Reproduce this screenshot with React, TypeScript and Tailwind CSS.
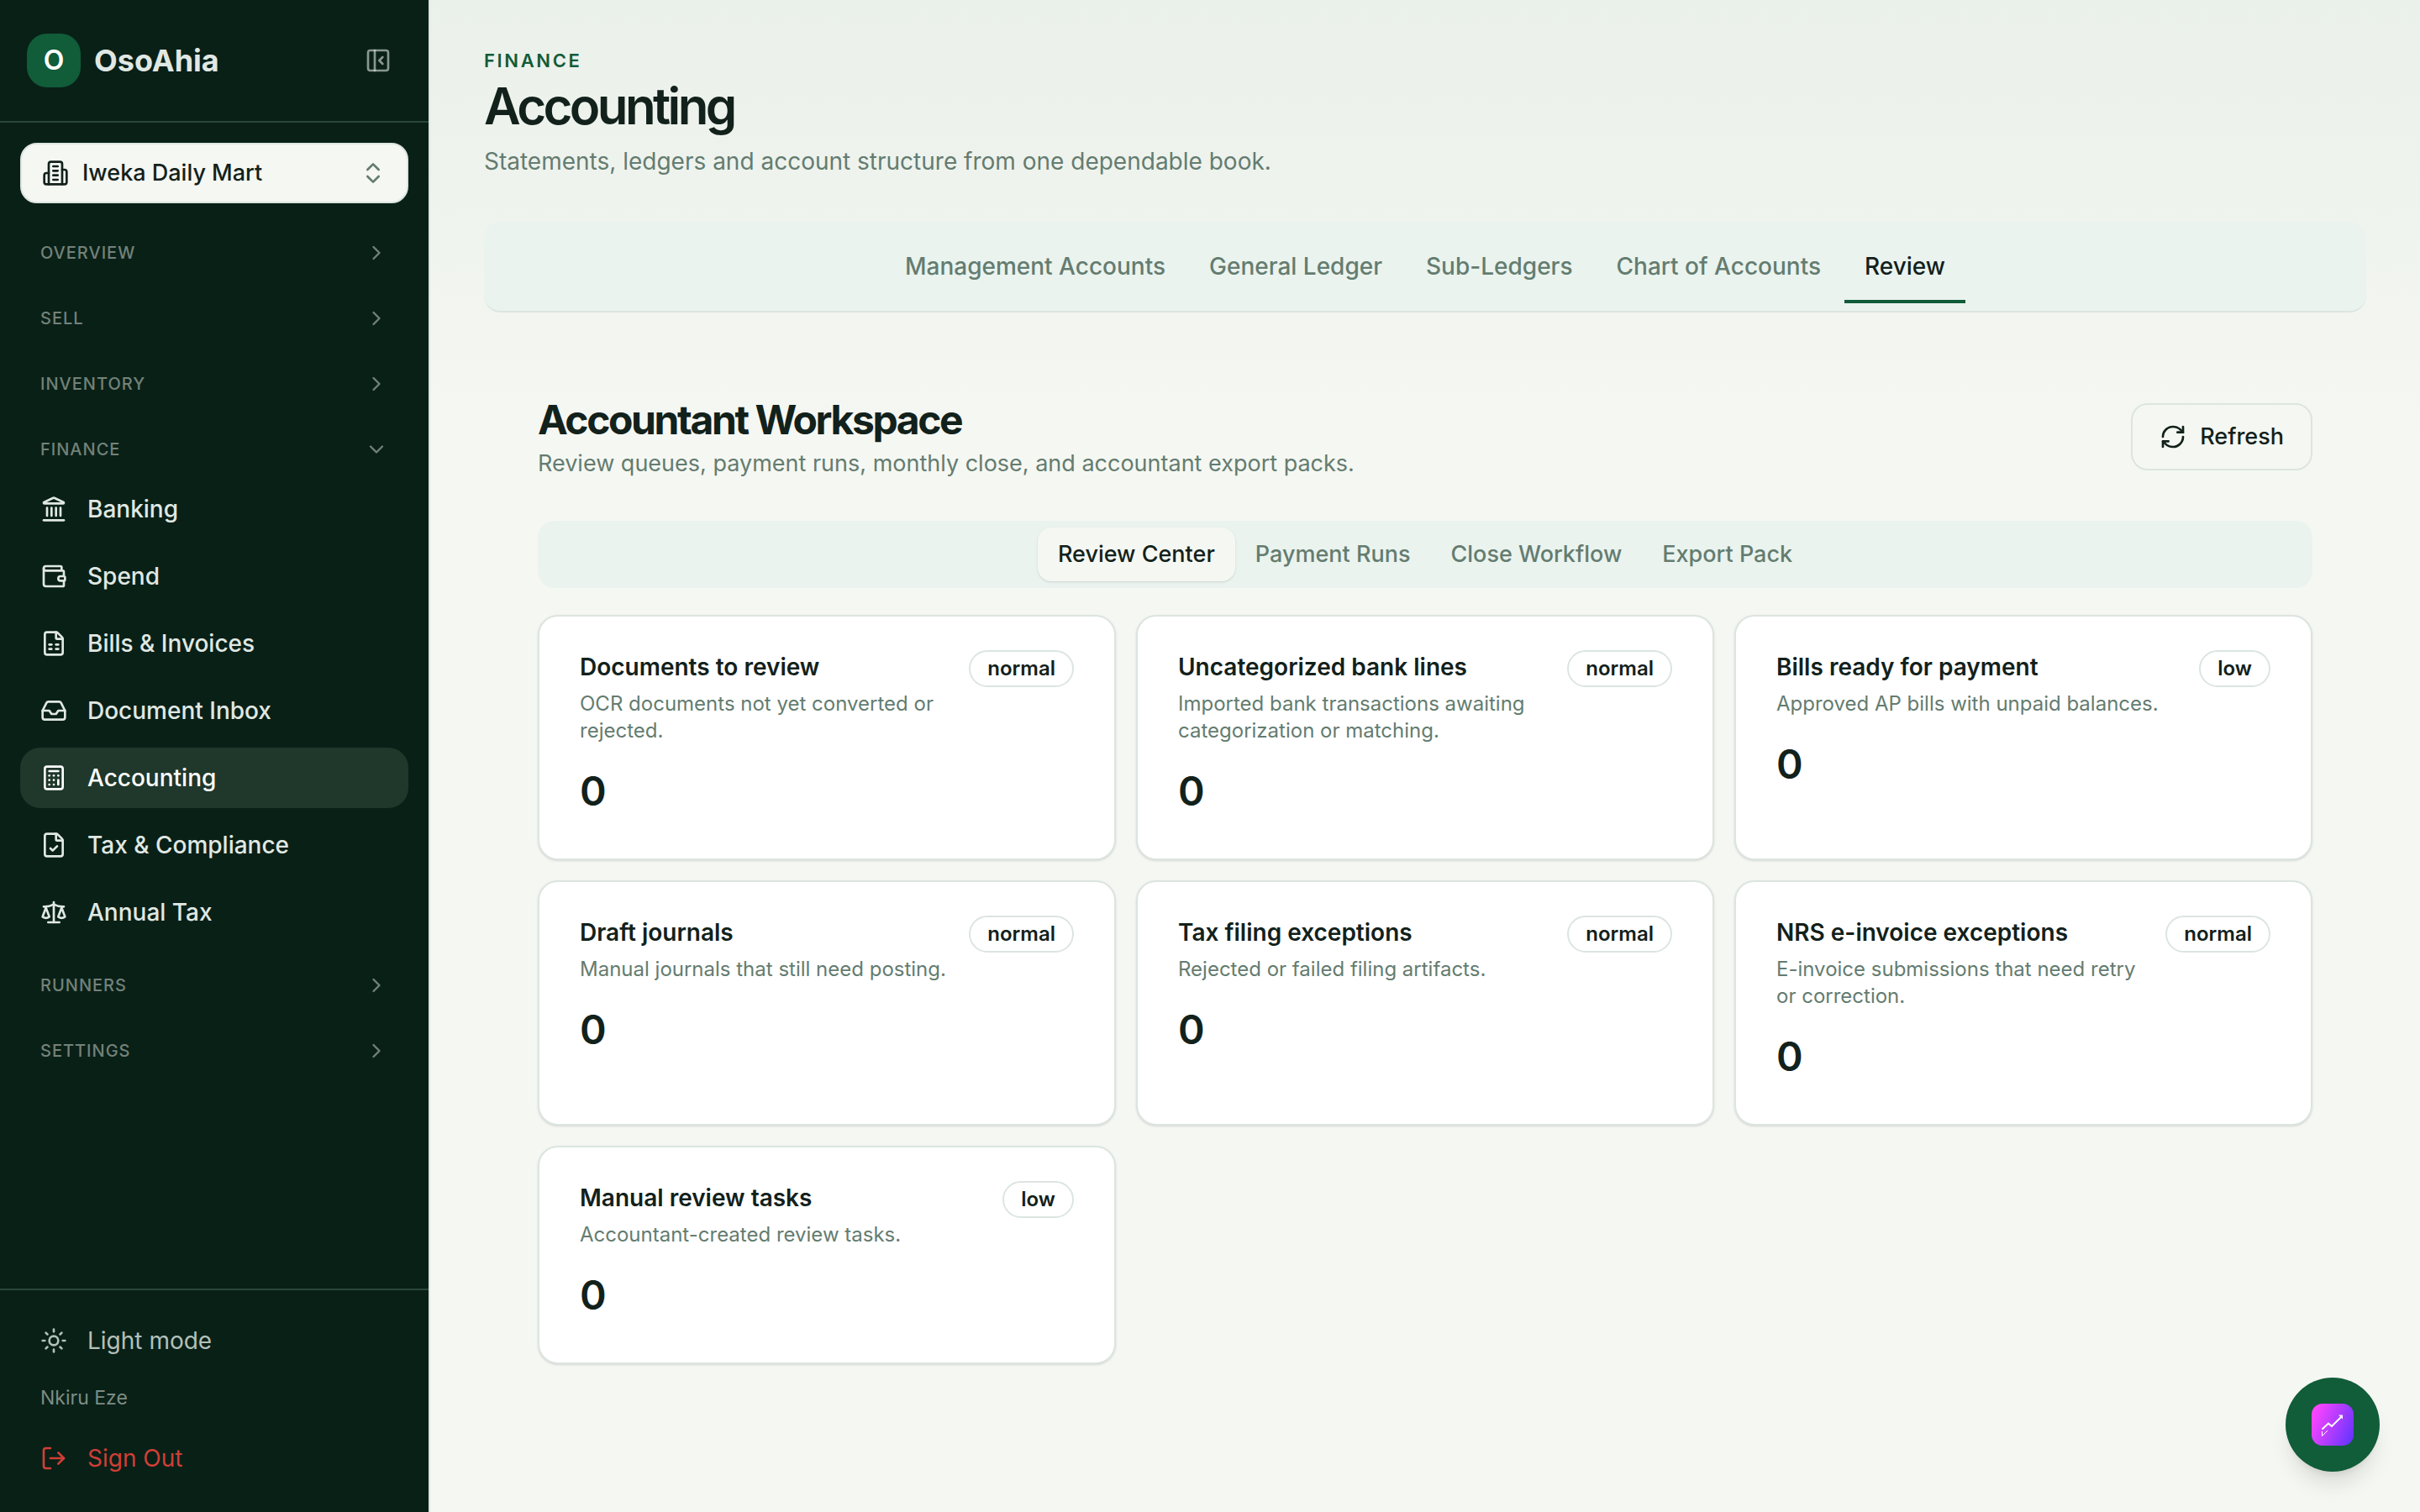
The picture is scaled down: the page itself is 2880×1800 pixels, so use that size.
import type { ReactNode } from "react";
import {
    Calculator,
    ChevronDown,
    ChevronRight,
    ChevronsUpDown,
    FileCheck,
    FileSpreadsheet,
    Inbox,
    Landmark,
    LogOut,
    PanelLeftClose,
    RefreshCw,
    Scale,
    Sun,
    Wallet,
} from "lucide-react";

const financeLinks = [
    { label: "Banking", icon: Landmark },
    { label: "Spend", icon: Wallet },
    { label: "Bills & Invoices", icon: FileSpreadsheet },
    { label: "Document Inbox", icon: Inbox },
    { label: "Accounting", icon: Calculator },
    { label: "Tax & Compliance", icon: FileCheck },
    { label: "Annual Tax", icon: Scale },
];

const accountingTabs = [
    "Management Accounts",
    "General Ledger",
    "Sub-Ledgers",
    "Chart of Accounts",
    "Review",
];

const workspaceTabs = ["Review Center", "Payment Runs", "Close Workflow", "Export Pack"];

const queues = [
    {
        title: "Documents to review",
        description: "OCR documents not yet converted or rejected.",
        priority: "normal",
        count: 0,
    },
    {
        title: "Uncategorized bank lines",
        description: "Imported bank transactions awaiting categorization or matching.",
        priority: "normal",
        count: 0,
    },
    {
        title: "Bills ready for payment",
        description: "Approved AP bills with unpaid balances.",
        priority: "low",
        count: 0,
    },
    {
        title: "Draft journals",
        description: "Manual journals that still need posting.",
        priority: "normal",
        count: 0,
    },
    {
        title: "Tax filing exceptions",
        description: "Rejected or failed filing artifacts.",
        priority: "normal",
        count: 0,
    },
    {
        title: "NRS e-invoice exceptions",
        description: "E-invoice submissions that need retry or correction.",
        priority: "normal",
        count: 0,
    },
    {
        title: "Manual review tasks",
        description: "Accountant-created review tasks.",
        priority: "low",
        count: 0,
    },
];

export default function App() {
    return (
        <div className="flex min-h-screen bg-[#f5f7f2] font-['Inter',sans-serif] text-[#12211b]">
            <Sidebar />
            <main className="min-w-0 flex-1 bg-[linear-gradient(to_bottom,#eaf0ea_0px,#f5f7f2_520px)] px-16 pb-16">
                <PageHeader />
                <AccountingTabs />
                <Workspace />
            </main>
            <AssistantButton />
        </div>
    );
}

const Sidebar = () => (
    <aside className="flex w-[512px] flex-shrink-0 flex-col border-r-2 border-[#dce5e0] bg-[#092017] text-[#e0e8e3]">
        <div className="flex h-[146px] items-center border-b-2 border-[#2a4739] pr-11 pl-8">
            <div className="flex size-16 items-center justify-center rounded-3xl bg-[#115c39] text-[32px] font-semibold text-white">
                O
            </div>
            <span className="ml-4 text-[36px] font-bold">OsoAhia</span>
            <button type="button" aria-label="Collapse sidebar" className="ml-auto text-[#e0e8e3]/60">
                <PanelLeftClose size={32} />
            </button>
        </div>

        <div className="px-6 pt-6">
            <button
                type="button"
                className="flex h-[72px] w-full items-center rounded-[20px] border-2 border-[#dce5e0] bg-[#f5f7f2] px-6 text-[#12211b]"
            >
                <BuildingIcon />
                <span className="ml-4 text-[27px] font-medium">Iweka Daily Mart</span>
                <ChevronsUpDown size={32} className="ml-auto text-[#647c70]" />
            </button>
        </div>

        <nav className="flex flex-col gap-6 px-6 pt-8">
            <NavSection label="Overview" />
            <NavSection label="Sell" />
            <NavSection label="Inventory" />
            <NavSection label="Finance" open>
                {financeLinks.map(({ label, icon: Icon }) => (
                    <a
                        key={label}
                        href="#"
                        className={`flex h-[72px] items-center gap-6 rounded-3xl px-6 text-[28px] font-medium ${
                            label === "Accounting" ? "bg-[#1f382b] text-white" : "text-[#e0e8e3]"
                        }`}
                    >
                        <Icon size={32} />
                        {label}
                    </a>
                ))}
            </NavSection>
            <NavSection label="Runners" />
            <NavSection label="Settings" />
        </nav>

        <div className="mt-auto border-t-2 border-[#2a4739] px-6 pt-6 pb-7">
            <button type="button" className="flex h-[72px] w-full items-center gap-6 px-6 text-[28px] text-[#b3c0b9]">
                <Sun size={32} />
                Light mode
            </button>
            <p className="flex h-[68px] items-center px-6 pb-1 text-[23px] text-[#7d8c84]">Nkiru Eze</p>
            <button type="button" className="flex h-[72px] w-full items-center gap-6 px-6 text-[28px] text-[#cf3f36]">
                <LogOut size={32} />
                Sign Out
            </button>
        </div>
    </aside>
);

interface NavSectionProps {
    label: string;
    open?: boolean;
    children?: ReactNode;
}

const NavSection = ({ label, open = false, children }: NavSectionProps) => {
    const Chevron = open ? ChevronDown : ChevronRight;
    return (
        <div>
            <button
                type="button"
                aria-expanded={open}
                className="flex h-[54px] w-full items-center justify-between px-6 text-[#738279]"
            >
                <span className="text-[20px] font-medium uppercase tracking-wider">{label}</span>
                <Chevron size={28} />
            </button>
            {children && <div className="mt-2 flex flex-col gap-2">{children}</div>}
        </div>
    );
};

const PageHeader = () => (
    <header className="pt-14">
        <p className="text-[22px] leading-8 font-semibold uppercase tracking-[0.12em] text-[#115c39]">Finance</p>
        <h1 className="mt-1 text-[60px] leading-[68px] font-semibold tracking-[-0.06em]">Accounting</h1>
        <p className="mt-3 text-[28px] leading-10 text-[#647c70]">
            Statements, ledgers and account structure from one dependable book.
        </p>
    </header>
);

const AccountingTabs = () => (
    <div
        role="tablist"
        className="mt-[52px] flex h-[108px] items-center justify-center gap-1 rounded-[20px] border-b-2 border-[#dce5e0] bg-[#eaf3ee]"
    >
        {accountingTabs.map((tab) => (
            <button
                key={tab}
                type="button"
                role="tab"
                aria-selected={tab === "Review"}
                className={`flex h-[88px] items-center border-b-4 px-6 pt-1 text-[28px] font-medium ${
                    tab === "Review"
                        ? "border-[#115c39] text-[#12211b]"
                        : "border-transparent text-[#647c70]"
                }`}
            >
                {tab}
            </button>
        ))}
    </div>
);

const Workspace = () => (
    <section className="px-16 pt-[100px]">
        <div className="flex items-start justify-between">
            <div>
                <h2 className="text-[48px] leading-[56px] font-bold tracking-tighter">Accountant Workspace</h2>
                <p className="mt-1 text-[27px] leading-10 text-[#647c70]">
                    Review queues, payment runs, monthly close, and accountant export packs.
                </p>
            </div>
            <button
                type="button"
                className="mt-2 flex h-20 items-center gap-4 rounded-[20px] border-2 border-[#dce5e0] bg-[#f5f7f2] px-8 text-[27px] font-medium"
            >
                <RefreshCw size={32} />
                Refresh
            </button>
        </div>

        <div role="tablist" className="mt-12 flex h-20 items-center justify-center rounded-[20px] bg-[#eaf3ee]">
            {workspaceTabs.map((tab) => (
                <button
                    key={tab}
                    type="button"
                    role="tab"
                    aria-selected={tab === "Review Center"}
                    className={`h-16 rounded-2xl px-6 text-[27px] font-medium ${
                        tab === "Review Center" ? "bg-[#f5f7f2] text-[#12211b] shadow-sm" : "text-[#647c70]"
                    }`}
                >
                    {tab}
                </button>
            ))}
        </div>

        <div className="mt-8 grid grid-cols-3 gap-6">
            {queues.map((queue) => (
                <QueueCard key={queue.title} {...queue} />
            ))}
        </div>
    </section>
);

interface QueueCardProps {
    title: string;
    description: string;
    priority: string;
    count: number;
}

const QueueCard = ({ title, description, priority, count }: QueueCardProps) => (
    <article className="rounded-3xl border-2 border-[#dce5e0] bg-white px-12 pt-10 pb-12 shadow-sm">
        <div className="flex items-start justify-between gap-6">
            <div>
                <h3 className="text-[28px] leading-10 font-semibold">{title}</h3>
                <p className="mt-2 text-[24px] leading-8 text-[#647c70]">{description}</p>
            </div>
            <span className="flex h-11 items-center rounded-full border-2 border-[#dce5e0] px-5 text-[24px] font-semibold">
                {priority}
            </span>
        </div>
        <p className="mt-6 text-[48px] leading-[64px] font-semibold">{count}</p>
    </article>
);

const AssistantButton = () => (
    <button
        type="button"
        aria-label="Open assistant"
        className="fixed right-12 bottom-12 flex size-28 items-center justify-center rounded-full bg-[#115c39] shadow-xl"
    >
        <svg width="50" height="50" viewBox="0 0 50 50" fill="none">
            <defs>
                <linearGradient id="assistant" x1="0" y1="14" x2="50" y2="36" gradientUnits="userSpaceOnUse">
                    <stop stopColor="#ff45ff" />
                    <stop offset="1" stopColor="#6a35ff" />
                </linearGradient>
            </defs>
            <rect width="50" height="50" rx="13" fill="url(#assistant)" />
            <path d="M12.500 30.500 20 23.500 24 27 35 16" stroke="white" strokeWidth="2" />
            <path d="M32 13.500h5v5z" fill="white" />
            <path d="M12.500 33v5.500L19 32" stroke="white" />
        </svg>
    </button>
);

const BuildingIcon = () => (
    <svg
        width="32"
        height="32"
        viewBox="0 0 24 24"
        fill="none"
        stroke="currentColor"
        strokeWidth="2"
        strokeLinecap="round"
        strokeLinejoin="round"
    >
        <path d="M6 22V4a2 2 0 0 1 2-2h8a2 2 0 0 1 2 2v18Z" />
        <path d="M6 12H4a2 2 0 0 0-2 2v6a2 2 0 0 0 2 2h2" />
        <path d="M18 9h2a2 2 0 0 1 2 2v9a2 2 0 0 1-2 2h-2" />
        <path d="M10 6h4" />
        <path d="M10 10h4" />
        <path d="M10 14h4" />
        <path d="M10 18h4" />
    </svg>
);
